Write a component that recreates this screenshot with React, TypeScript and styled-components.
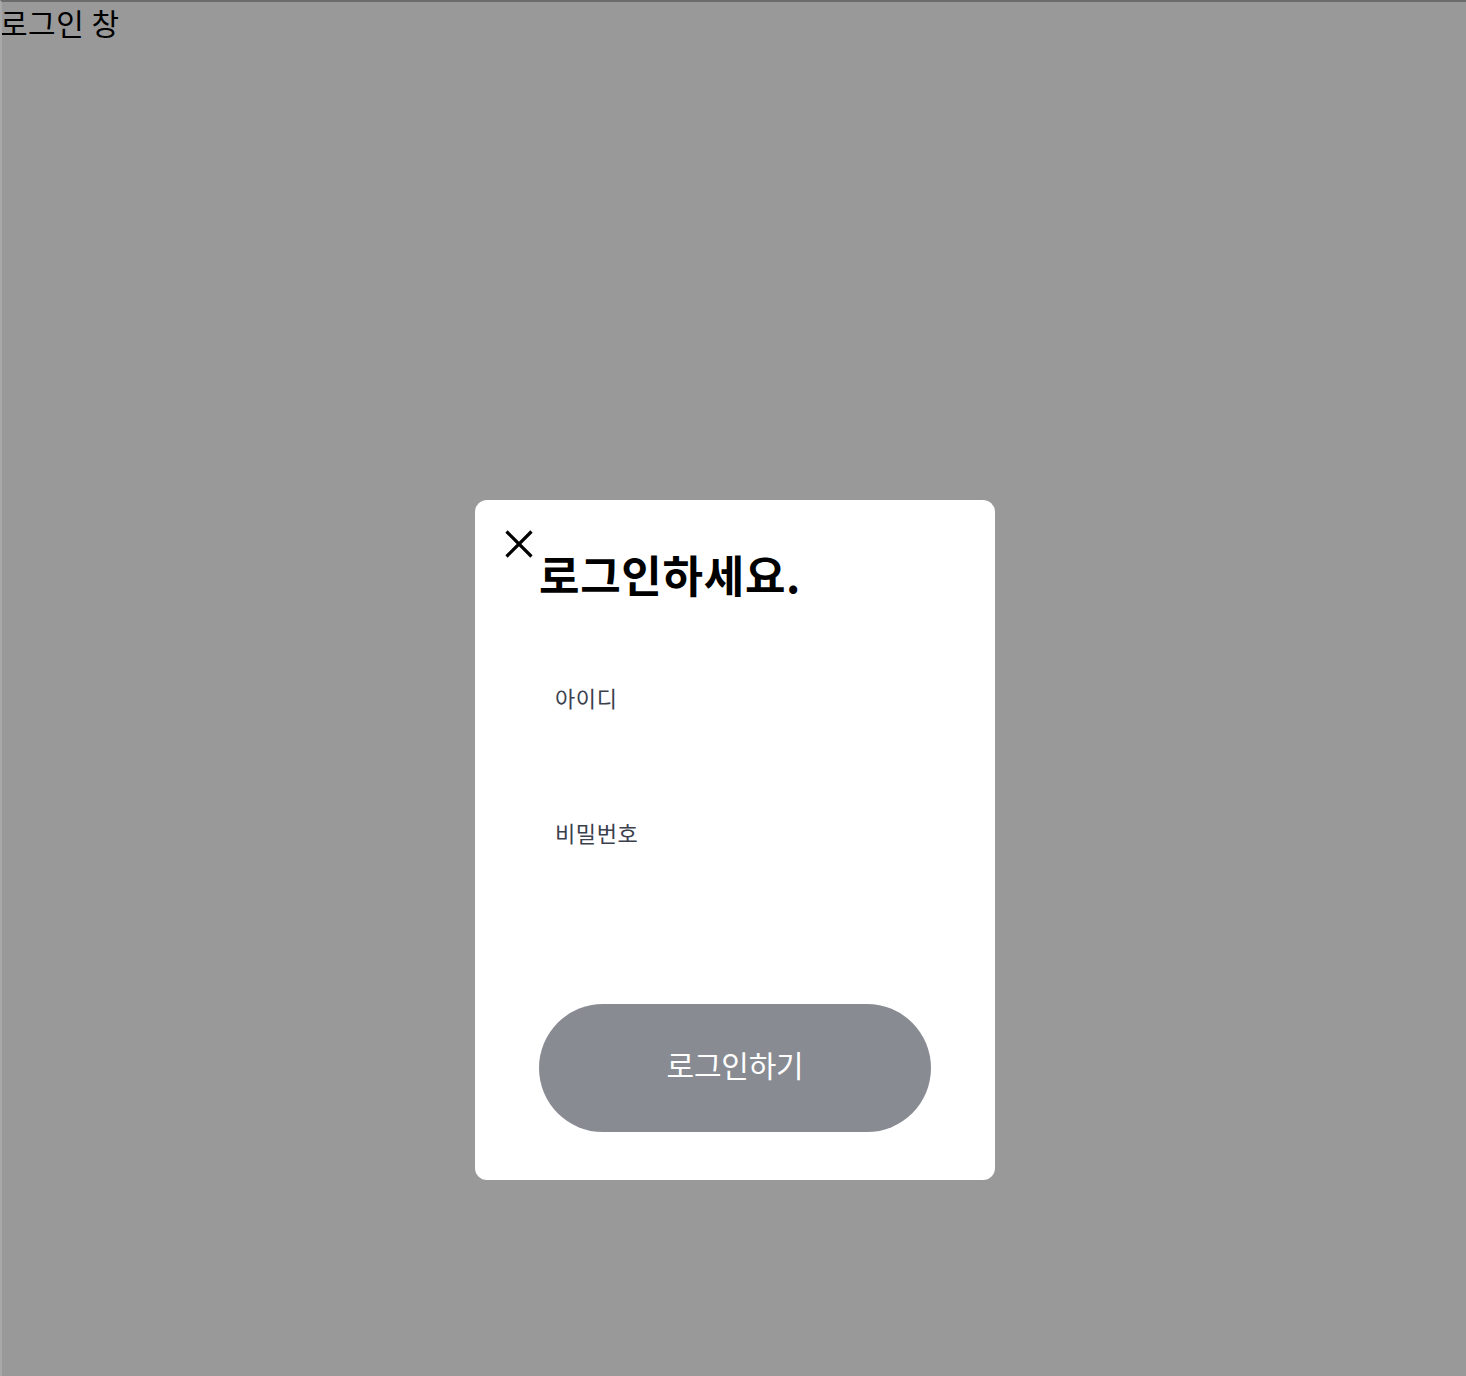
import React, { useEffect, useRef } from "react";
import styled, { createGlobalStyle } from "styled-components";

const GlobalStyle = createGlobalStyle`
  html, body {
    margin: 0;
    padding: 0;
    background: #ffffff;
    font-family: "Noto Sans CJK KR", "Noto Sans", sans-serif;
  }
`;

// page heading behind the overlay
const PageTitle = styled.div`
  font-size: 30px;
  line-height: 44px;
  letter-spacing: 0.5px;
  color: #000;
`;

const Overlay = styled.div`
  position: fixed;
  inset: 0;
  box-sizing: border-box;
  border-top: 2px solid #6b6b6b;
  border-left: 2px solid #a8a8a8;
  background: rgba(0, 0, 0, 0.4);
  display: flex;
  justify-content: center;
  align-items: flex-start;
  padding-top: 498px;
  padding-left: 2px;
`;

const Modal = styled.div`
  position: relative;
  box-sizing: border-box;
  width: 520px;
  height: 680px;
  padding: 44px 64px 48px;
  background: #ffffff;
  border-radius: 12px;
  display: flex;
  flex-direction: column;
`;

const CloseButton = styled.button`
  position: absolute;
  top: 30px;
  left: 30px;
  width: 28px;
  height: 28px;
  padding: 0;
  border: none;
  background: none;
  cursor: pointer;
  display: flex;
  align-items: center;
  justify-content: center;
`;

const Title = styled.h2`
  margin: 0;
  font-size: 44px;
  font-weight: 700;
  letter-spacing: 0.7px;
  line-height: 60px;
  color: #000;
`;

const Form = styled.form`
  display: flex;
  flex-direction: column;
  flex: 1;
  margin-top: 77px;
`;

const Field = styled.label`
  display: flex;
  flex-direction: column;
  padding-left: 16px;
  margin-bottom: 47px;
`;

const FieldLabel = styled.span`
  font-size: 22px;
  line-height: 32px;
  color: #3b404d;
  letter-spacing: 0.6px;
`;

const Input = styled.input`
  margin-top: 16px;
  height: 40px;
  padding: 0;
  border: none;
  outline: none;
  background: transparent;
  font-family: inherit;
  font-size: 26px;
  color: #000;
  caret-color: #000;
`;

const SubmitButton = styled.button`
  margin-top: auto;
  width: 100%;
  height: 128px;
  padding: 0 0 8px;
  border: none;
  border-radius: 64px;
  background: #898b93;
  color: #ffffff;
  font-family: inherit;
  font-size: 30px;
  letter-spacing: -0.2px;
  cursor: pointer;
`;

const CloseIcon = () => (
  <svg width="28" height="28" viewBox="0 0 28 28" fill="none">
    <path
      d="M1.5 1.5 L26.5 26.5 M26.5 1.5 L1.5 26.5"
      stroke="#000"
      strokeWidth="3.2"
    />
  </svg>
);

const App: React.FC = () => {
  const idRef = useRef<HTMLInputElement>(null);

  useEffect(() => {
    idRef.current?.focus();
  }, []);

  return (
    <>
      <GlobalStyle />
      <PageTitle>로그인 창</PageTitle>
      <Overlay>
        <Modal>
          <CloseButton type="button" aria-label="닫기">
            <CloseIcon />
          </CloseButton>
          <Title>로그인하세요.</Title>
          <Form onSubmit={(e) => e.preventDefault()}>
            <Field>
              <FieldLabel>아이디</FieldLabel>
              <Input ref={idRef} type="text" />
            </Field>
            <Field>
              <FieldLabel>비밀번호</FieldLabel>
              <Input type="password" />
            </Field>
            <SubmitButton type="submit">로그인하기</SubmitButton>
          </Form>
        </Modal>
      </Overlay>
    </>
  );
};

export default App;
